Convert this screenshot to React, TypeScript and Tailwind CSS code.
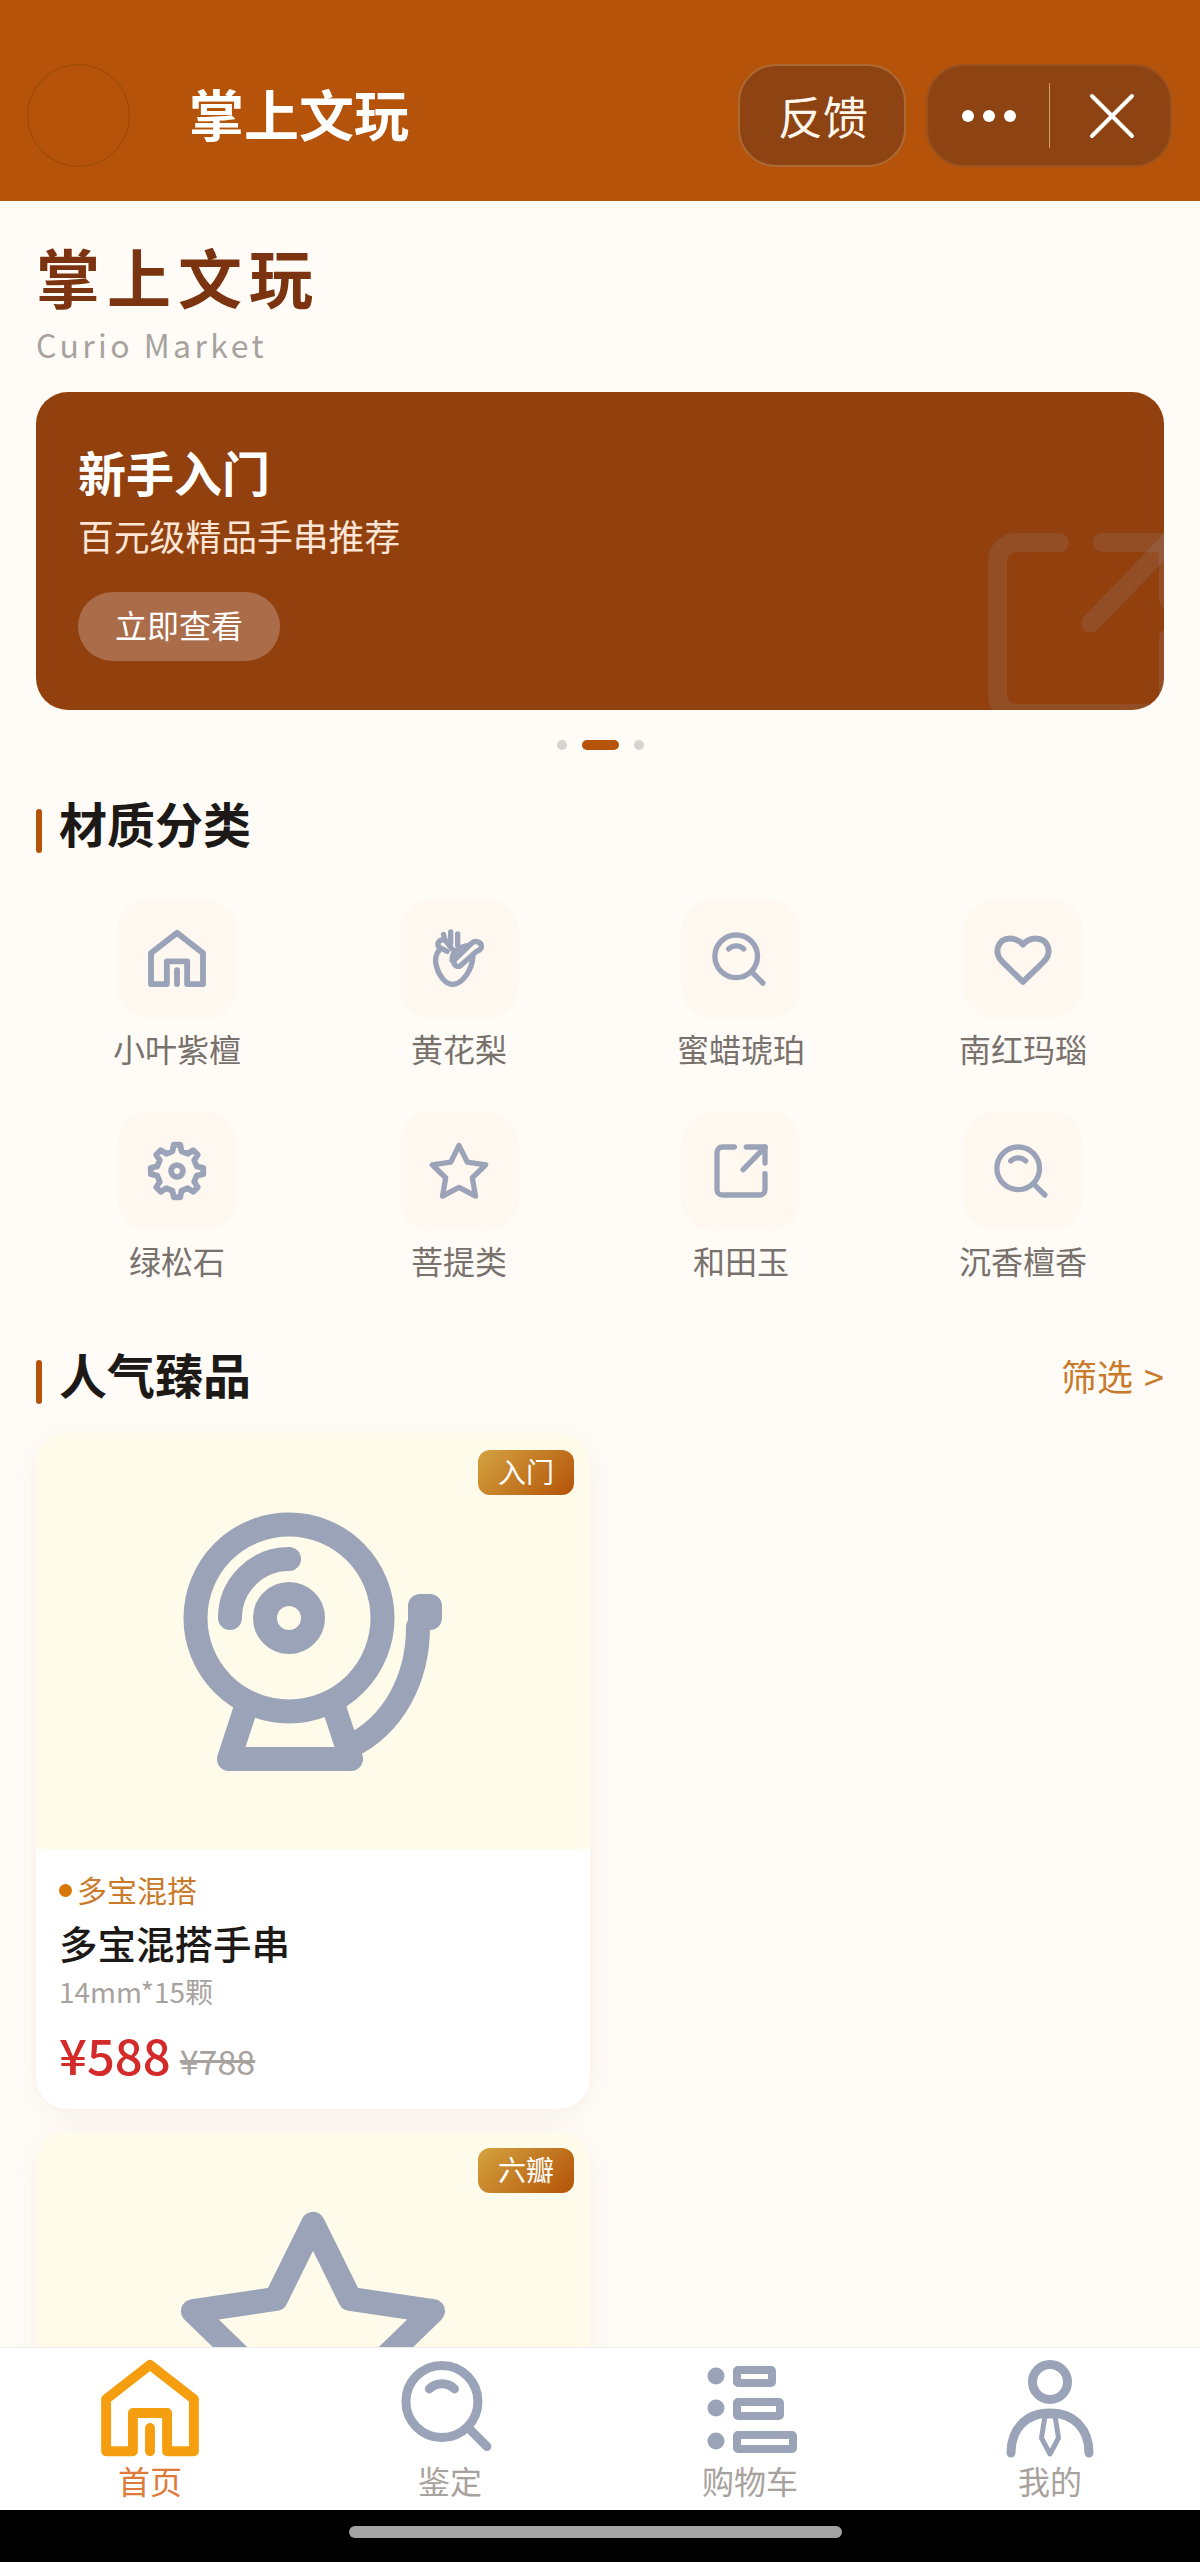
import React from "react";

type IconProps = { size?: number; color?: string; className?: string };

function Svg({ size = 64, color = "#9aa3b7", className, children, sw = 2.2 }: IconProps & { children: React.ReactNode; sw?: number }) {
  return (
    <svg
      width={size}
      height={size}
      viewBox="0 0 24 24"
      fill="none"
      stroke={color}
      strokeWidth={sw}
      strokeLinecap="round"
      strokeLinejoin="round"
      className={className}
    >
      {children}
    </svg>
  );
}

const HomeIcon = (p: IconProps) => (
  <Svg {...p}>
    <path d="M2.25 9.8 12 2.2l9.75 7.6v11.6H15.8v-8.5H8.2v8.5H2.25Z" />
    <path d="M12 16.2v5.2" />
  </Svg>
);

const SearchIcon = (p: IconProps) => (
  <Svg {...p} sw={2}>
    <g transform="translate(-0.8 0)">
      <circle cx="11" cy="11" r="8" />
      <path d="m21 21-4.3-4.3" />
      <path d="M8.2 8.2a4 4 0 0 1 5.6 0" />
    </g>
  </Svg>
);

const HeartIcon = (p: IconProps) => (
  <Svg {...p}>
    <path d="M12 20.6 4.2 13C.8 9.5 2.6 4.3 7.2 4.3c2 0 3.6.9 4.8 2.3 1.2-1.4 2.8-2.3 4.8-2.3 4.6 0 6.4 5.2 3 8.7Z" />
  </Svg>
);

const StarIcon = (p: IconProps) => (
  <Svg {...p} sw={2}>
    <polygon transform="translate(0 0.4)" points="12 2 15.09 8.26 22 9.27 17 14.14 18.18 21.02 12 17.77 5.82 21.02 7 14.14 2 9.27 8.91 8.26" />
  </Svg>
);

const ShareIcon = (p: IconProps) => (
  <Svg {...p} sw={2}>
    <path d="M21 13v6a2 2 0 0 1-2 2H5a2 2 0 0 1-2-2V5a2 2 0 0 1 2-2h4.5" />
    <path d="M21 3 12.8 11.5" />
    <path d="M14 3h7v6" />
  </Svg>
);

const AnatomyIcon = (p: IconProps) => (
  <Svg {...p} sw={2}>
    <path d="M4.6 8.6C3 10.5 3 13 3.6 15c1 3.5 3.4 6.5 6.2 6.5 3.4 0 7.2-5.5 7.4-10.5" />
    <path d="M7.6 9.2 4.4 7.4c-1-1.6.9-3.3 2.6-2.2l2.4 3" />
    <path d="M10.6 12 16.8 6c1.2-1 3.6-.6 3.6 1.2 0 1-.8 1.6-1.8 1.9l-6.1 5.4c-1.5 1-3.2-.8-1.9-2.5Z" />
    <path d="M9.4 12.6C9.2 9.8 11.4 7.6 15 7" />
    <path d="M6.7 4.6 6.2 2.8M8.9 6V1.8M11.5 6.8V2.6" />
  </Svg>
);

const gearPath = (() => {
  const pts: string[] = [];
  for (let i = 0; i < 8; i++) {
    const a = (i * Math.PI) / 4 - Math.PI / 2;
    const p = (r: number, d: number) => {
      const t = a + (d * Math.PI) / 180;
      return `${(12 + r * Math.cos(t)).toFixed(2)} ${(12 + r * Math.sin(t)).toFixed(2)}`;
    };
    pts.push(p(7.6, -13), p(9.9, -7), p(9.9, 7), p(7.6, 13));
  }
  return `M${pts.join("L")}Z`;
})();

const GearIcon = (p: IconProps) => (
  <Svg {...p}>
    <path d={gearPath} />
    <circle cx="12" cy="12" r="2.2" />
  </Svg>
);

const BellIcon = () => (
  <svg width="288" height="288" viewBox="0 0 288 288" fill="none" stroke="#9aa3b7" strokeWidth="24" strokeLinecap="round" strokeLinejoin="round">
    <circle cx="120" cy="121" r="93.5" />
    <circle cx="120" cy="121" r="24" />
    <path d="M61 121A59 59 0 0 1 120 62" />
    <path d="M76 213 60 262H182L166 213" />
    <path d="M249 130C249 180 226 228 180 250" />
    <rect x="239" y="97" width="34" height="36" rx="12" fill="#9aa3b7" stroke="none" />
  </svg>
);

const ListIcon = () => (
  <svg width="108" height="108" viewBox="0 0 108 108" fill="none" stroke="#9aa3b7" strokeWidth="8" strokeLinejoin="round">
    <circle cx="20" cy="24" r="8.5" fill="#9aa3b7" stroke="none" />
    <circle cx="20" cy="56" r="8.5" fill="#9aa3b7" stroke="none" />
    <circle cx="20" cy="89" r="8.5" fill="#9aa3b7" stroke="none" />
    <rect x="41" y="18" width="35" height="13" rx="1" />
    <rect x="41" y="50" width="43" height="14" rx="1" />
    <rect x="41" y="83" width="56" height="14" rx="1" />
  </svg>
);

const PersonIcon = () => (
  <svg width="108" height="108" viewBox="0 0 108 108" fill="none" stroke="#9aa3b7" strokeWidth="9" strokeLinecap="round" strokeLinejoin="round">
    <circle cx="54" cy="30" r="17.5" />
    <path d="M15 101C15 77 30 61 54 61C78 61 93 77 93 101" />
    <path d="M49 64 45.5 86 54 102 62.5 86 59 64Z" strokeWidth="5" />
  </svg>
);

const materials: [string, React.ComponentType<IconProps>][] = [
  ["小叶紫檀", HomeIcon],
  ["黄花梨", AnatomyIcon],
  ["蜜蜡琥珀", SearchIcon],
  ["南红玛瑙", HeartIcon],
  ["绿松石", GearIcon],
  ["菩提类", StarIcon],
  ["和田玉", ShareIcon],
  ["沉香檀香", SearchIcon],
];

function Heading({ children }: { children: React.ReactNode }) {
  return (
    <div className="flex items-center h-[48px]">
      <span className="w-[6px] h-[44px] mt-[9px] rounded-full bg-[#b45309]" />
      <span className="ml-[17px] mb-[9px] text-[48px] leading-[48px] font-semibold text-[#1c1917]">{children}</span>
    </div>
  );
}

function Badge({ children }: { children: React.ReactNode }) {
  return (
    <span className="absolute top-[17px] right-[16px] w-[96px] h-[45px] pb-[3px] rounded-[12px] flex items-center justify-center text-[28px] leading-[40px] text-white bg-[linear-gradient(135deg,#d4a33f,#b45309)]">
      {children}
    </span>
  );
}

export default function App() {
  return (
    <div className="flex flex-col h-[2562px] w-[1200px] overflow-hidden bg-[#fffcf7] font-['Noto_Sans_CJK_SC','Noto_Sans',sans-serif]">
      <header className="h-[201px] shrink-0 bg-[#b45309] flex items-start pt-[64px] pl-[27px] pr-[28px]">
        <div className="w-[103px] h-[103px] rounded-full border border-[#9a4707]" />
        <div className="ml-[59px] h-[103px] pb-[6px] flex items-center text-[55px] font-semibold text-white">掌上文玩</div>
        <div className="ml-auto w-[168px] h-[103px] pl-[2px] rounded-[38px] border-2 border-[#ad6a35] bg-[#8e4312] flex items-center justify-center text-[45px] text-[#fff6ec]">
          反馈
        </div>
        <div className="ml-[20px] w-[246px] h-[103px] rounded-[38px] border-2 border-[#9a5220] bg-[#8e4312] flex items-center">
          <div className="w-[121px] flex items-center justify-center gap-[9px]">
            <span className="w-[12px] h-[12px] rounded-full bg-white" />
            <span className="w-[12px] h-[12px] rounded-full bg-white" />
            <span className="w-[12px] h-[12px] rounded-full bg-white" />
          </div>
          <span className="w-px h-[65px] bg-[#d79a63]" />
          <div className="flex-1 flex items-center justify-center pl-[3px]">
            <svg width="46" height="46" viewBox="0 0 46 46" stroke="#fff" strokeWidth="4" strokeLinecap="round">
              <path d="M3 3l40 40M43 3 3 43" />
            </svg>
          </div>
        </div>
      </header>

      <main className="flex-1 min-h-0 overflow-hidden px-[36px] pt-[42px]">
        <h1 className="text-[64px] leading-[64px] font-bold tracking-[7px] text-[#7c3410]">掌上文玩</h1>
        <p className="mt-[17px] text-[32px] leading-[40px] tracking-[3.4px] text-[#a8a29e]">Curio Market</p>

        <section className="relative mt-[28px] h-[318px] rounded-[32px] bg-[#92400e] overflow-hidden pl-[42px] pt-[49px]">
          <h2 className="text-[48px] leading-[60px] font-semibold text-white">新手入门</h2>
          <p className="mt-[9px] text-[35.8px] leading-[50px] text-[#fde6d5]">百元级精品手串推荐</p>
          <div className="mt-[32px] w-[202px] h-[69px] pb-[6px] rounded-full bg-[#ab6d49] flex items-center justify-center text-[32px] text-white">
            立即查看
          </div>
          <ShareIcon size={228} color="rgba(154,163,183,0.15)" className="absolute right-[-33px] bottom-[-32px]" />
        </section>

        <div className="mt-[30px] flex items-center justify-center gap-[15px]">
          <span className="w-[10px] h-[10px] rounded-full bg-[#d6d3d1]" />
          <span className="w-[37px] h-[10px] rounded-full bg-[#b45309]" />
          <span className="w-[10px] h-[10px] rounded-full bg-[#d6d3d1]" />
        </div>

        <div className="mt-[52px]">
          <Heading>材质分类</Heading>
        </div>

        <div className="mt-[49px] grid grid-cols-4 gap-y-[43px]">
          {materials.map(([label, Icon]) => (
            <div key={label} className="flex flex-col items-center">
              <div className="w-[120px] h-[120px] rounded-[32px] bg-[#fff8f0] flex items-center justify-center">
                <Icon size={64} />
              </div>
              <span className="mt-[9px] text-[32px] leading-[40px] text-[#78716c]">{label}</span>
            </div>
          ))}
        </div>

        <div className="mt-[73px] h-[48px] flex items-center justify-between">
          <Heading>人气臻品</Heading>
          <span className="mb-[4px] text-[36px] leading-[48px] text-[#c97a2b]">
            筛选<span className="ml-[11px]">&gt;</span>
          </span>
        </div>

        <article className="mt-[32px] w-[554px] rounded-[32px] bg-white overflow-hidden shadow-[0_4px_28px_rgba(120,53,15,0.07)]">
          <div className="relative h-[416px] bg-[#fffbeb] flex items-center justify-center">
            <Badge>入门</Badge>
            <BellIcon />
          </div>
          <div className="px-[24px] pt-[20px] pb-[23px]">
            <div className="flex items-center text-[30px] leading-[40px] text-[#c97a2b]">
              <span className="w-[13px] h-[13px] -ml-[1px] mt-[3px] rounded-full bg-[#d97706] mr-[5px]" />
              多宝混搭
            </div>
            <div className="mt-[7px] -ml-[1px] text-[38.5px] leading-[52px] font-medium text-[#1c1917]">多宝混搭手串</div>
            <div className="mt-[5px] -ml-[1px] text-[28px] leading-[36px] text-[#a8a29e]">14mm*15颗</div>
            <div className="mt-[13px] -ml-[1px] h-[64px] flex items-baseline">
              <span className="text-[49px] leading-[64px] font-medium text-[#d42a2a]">¥588</span>
              <span className="ml-[9px] text-[34px] leading-[64px] line-through text-[#a8a29e]">¥788</span>
            </div>
          </div>
        </article>

        <article className="mt-[22px] w-[554px] rounded-[32px] bg-white overflow-hidden shadow-[0_4px_28px_rgba(120,53,15,0.07)]">
          <div className="relative h-[416px] bg-[#fffbeb] flex items-center justify-center">
            <Badge>六瓣</Badge>
            <StarIcon size={288} />
          </div>
        </article>
      </main>

      <nav className="h-[163px] shrink-0 bg-white border-t border-[#eeeeee] grid grid-cols-4 pt-[4px] relative">
        <div className="flex flex-col items-center">
          <HomeIcon size={108} color="#f59e0f" className="translate-y-[3px]" />
          <span className="text-[32px] leading-[40px] text-[#dd7a3a]">首页</span>
        </div>
        <div className="flex flex-col items-center">
          <SearchIcon size={108} />
          <span className="text-[32px] leading-[40px] text-[#a8a29e]">鉴定</span>
        </div>
        <div className="flex flex-col items-center">
          <ListIcon />
          <span className="text-[32px] leading-[40px] text-[#a8a29e]">购物车</span>
        </div>
        <div className="flex flex-col items-center">
          <PersonIcon />
          <span className="text-[32px] leading-[40px] text-[#a8a29e]">我的</span>
        </div>
      </nav>

      <div className="h-[52px] shrink-0 bg-black flex justify-center pt-[16px] pr-[9px]">
        <span className="w-[493px] h-[12px] rounded-full bg-[#a3a3a3]" />
      </div>
    </div>
  );
}
